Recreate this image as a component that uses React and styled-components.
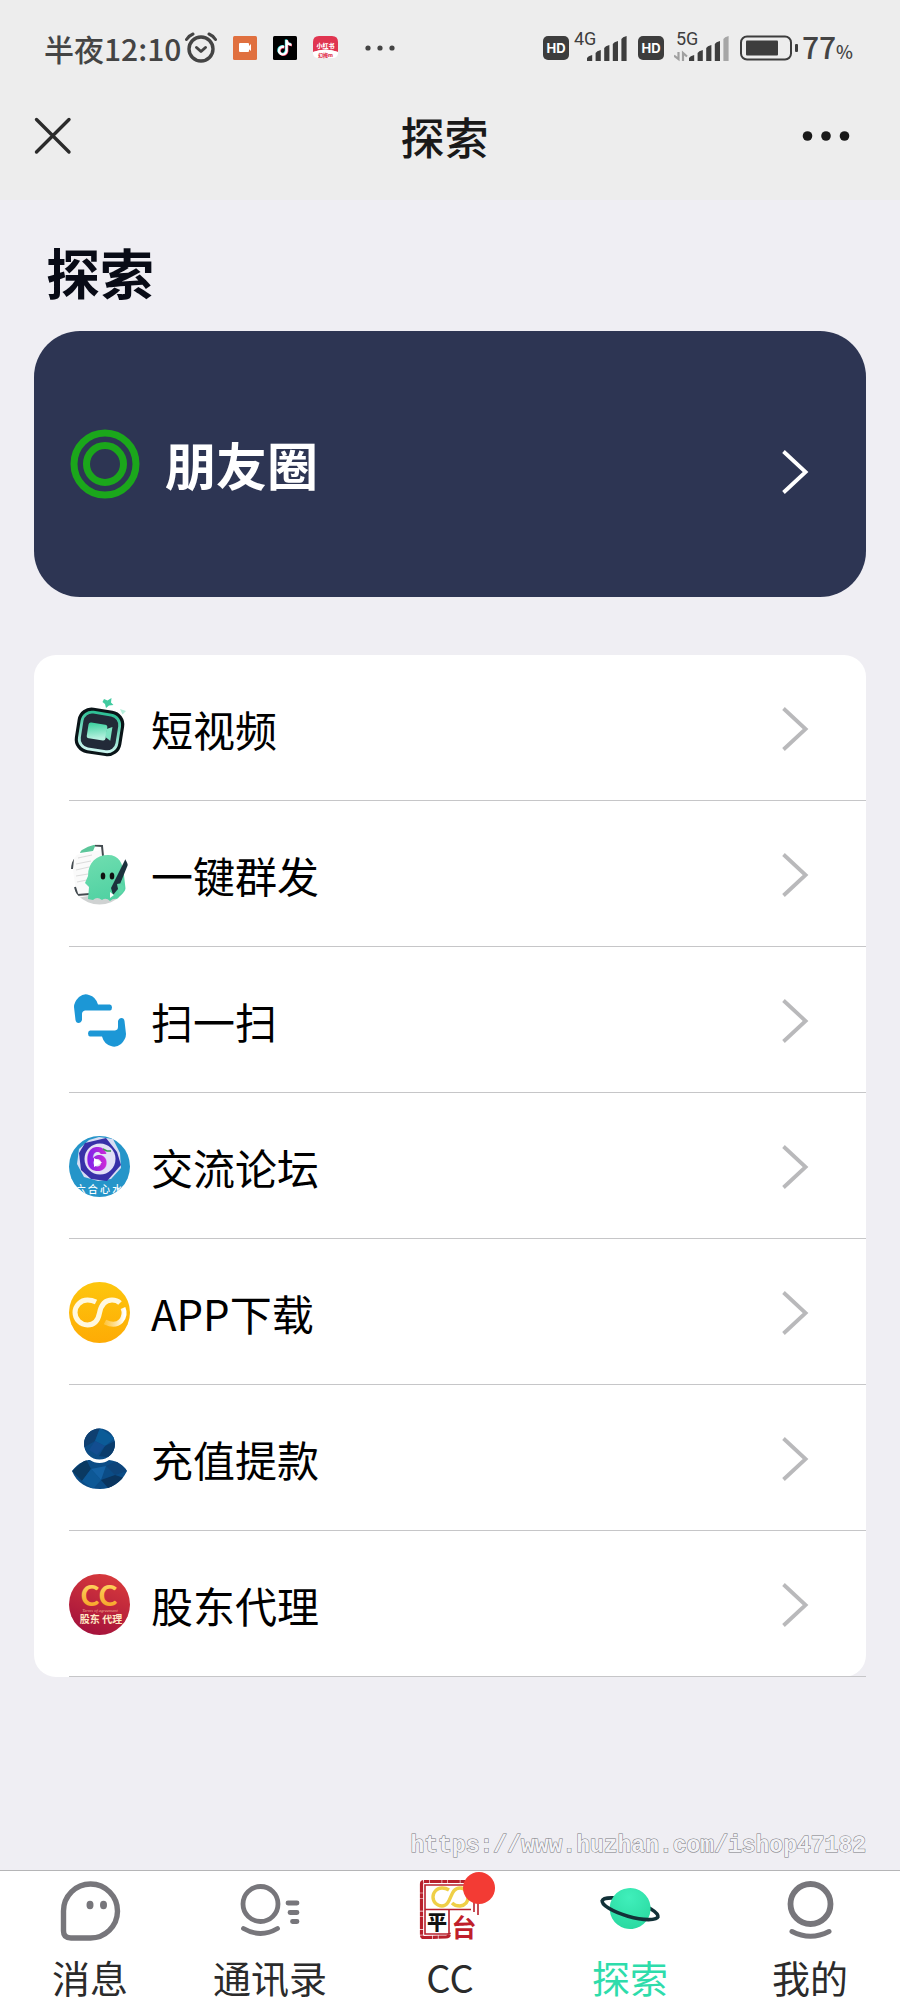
import styled, { createGlobalStyle, css } from "styled-components";

const GRAY = "#77767b";

const App = () => {
  return (
    <Page>
      <GlobalStyle />
      <StatusBar />
      <NavBar>
        <IconButton type="button" aria-label="关闭">
          <CloseIcon />
        </IconButton>
        <NavTitle>探索</NavTitle>
        <IconButton type="button" aria-label="更多" $end>
          <MoreIcon />
        </IconButton>
      </NavBar>

      <Main>
        <Heading>探索</Heading>

        <MomentsCard href="#moments">
          <MomentsIcon />
          <MomentsText>朋友圈</MomentsText>
          <MomentsArrow>
            <Chevron color="#fff" />
          </MomentsArrow>
        </MomentsCard>

        <Menu>
          {menuItems.map(({ id, label, Icon }) => (
            <MenuItem key={id}>
              <MenuLink href={`#${id}`}>
                <Icon />
                <MenuLabel>{label}</MenuLabel>
                <Chevron color="#b9b9bb" />
              </MenuLink>
            </MenuItem>
          ))}
        </Menu>

        <SiteUrl>https://www.huzhan.com/ishop47182</SiteUrl>
      </Main>

      <TabBar>
        {tabs.map(({ id, label, Icon, active, badge }) => (
          <Tab key={id} type="button" $active={active}>
            <TabIcon>
              <Icon />
              {badge && <Badge />}
            </TabIcon>
            {label}
          </Tab>
        ))}
      </TabBar>
    </Page>
  );
};

const StatusBar = () => (
  <StatusRow>
    <StatusGroup $gap={16}>
      <StatusGroup $gap={4}>
        <StatusText>半夜12:10</StatusText>
        <AlarmIcon />
      </StatusGroup>
      <RecorderIcon />
      <TiktokIcon />
      <RedbookIcon />
      <svg width="52" height="24" viewBox="0 0 52 24" fill="#444">
        <circle cx="14" cy="12" r="2.6" />
        <circle cx="26" cy="12" r="2.6" />
        <circle cx="38" cy="12" r="2.6" />
      </svg>
    </StatusGroup>
    <StatusGroup $gap={10}>
      <StatusGroup $gap={3}>
        <HdIcon />
        <Signal name="4G" level={5} />
      </StatusGroup>
      <HdIcon />
      <Signal name="5G" level={4} arrows />
      <StatusGroup $gap={4}>
        <BatteryIcon />
        <StatusText>
          77<small>%</small>
        </StatusText>
      </StatusGroup>
    </StatusGroup>
  </StatusRow>
);

/* 状态栏图标 */
const AlarmIcon = () => (
  <svg width="32" height="32" viewBox="0 0 32 32" fill="none" stroke="#444" strokeWidth="3" strokeLinecap="round" strokeLinejoin="round">
    <circle cx="16" cy="17" r="12" strokeWidth="3.4" />
    <path d="M11.5 15.5 16 19.5 20.5 15.5" />
    <path d="M1.5 7.5Q4 3.5 8 2M30.5 7.5Q28 3.5 24 2" />
  </svg>
);

const RecorderIcon = () => (
  <svg width="24" height="24" viewBox="0 0 24 24">
    <rect width="24" height="24" rx="1.5" fill="#e0703f" />
    <rect x="6" y="7" width="10" height="9" rx="1" fill="#fff" />
    <path d="M15 11 18 8V15L15 12.5Z" fill="#fff" />
  </svg>
);

const TiktokIcon = () => (
  <svg width="24" height="24" viewBox="0 0 24 24">
    <rect width="24" height="24" rx="1.5" fill="#000" />
    <g fill="none" strokeWidth="2.4">
      <path d="M10.5 10.5A3.8 3.8 0 1 0 13 14.5V3.5Q13.5 8 18 8.2" stroke="#3be6e6" />
      <path d="M11.6 11.5A3.8 3.8 0 1 0 14.2 15.5V4.5Q14.5 9 19 9.2" stroke="#f0355c" />
      <path d="M11 11A3.8 3.8 0 1 0 13.6 15V4Q14 8.5 18.5 8.7" stroke="#fff" />
    </g>
  </svg>
);

const RedbookIcon = () => (
  <svg width="25" height="24" viewBox="0 0 25 24">
    <path d="M0 16V6Q0 0 6 0H19Q25 0 25 6V16Q12.5 11 0 16Z" fill="#e03550" />
    <path d="M0 16Q12.5 11 25 16V18Q24 22 20 22H5Q1 22 0 18Z" fill="#fff" />
    <text x="12.5" y="11.5" textAnchor="middle" fontSize="6" fontWeight="900" fill="#fff">小红书</text>
    <text x="12.5" y="21" textAnchor="middle" fontSize="5" fontWeight="900" fill="#e03550">幻梅m</text>
  </svg>
);

const HdIcon = () => (
  <svg width="26" height="24" viewBox="0 0 26 24">
    <rect width="26" height="24" rx="5" fill="#3d3d3d" />
    <text x="13" y="17" textAnchor="middle" fontFamily="Inter, sans-serif" fontSize="13" fontWeight="700" fill="#fff">HD</text>
  </svg>
);

const Signal = ({ name, level, arrows }) => (
  <svg width="56" height="42" viewBox="0 -6 56 42">
    <text x="2" y="12" fontFamily="Roboto, sans-serif" fontSize="18" fill="#3d3d3d">{name}</text>
    {[6, 11, 16, 20, 25].map((h, i) => {
      const x = 15 + i * 8.6;
      return (
        <path
          key={h}
          d={`M${x} 28V${31 - h}Q${x + 1} ${29 - h} ${x + 5.2} ${28 - h}V28Z`}
          fill={i < level ? "#3d3d3d" : "#a6a6a6"}
        />
      );
    })}
    {arrows && <path d="M4.5 19V26L0 22.5M9 28V20L13 23.5" fill="none" stroke="#a0a0a0" strokeWidth="2.2" />}
  </svg>
);

const BatteryIcon = () => (
  <svg width="58" height="26" viewBox="0 0 58 26">
    <rect x="1" y="1.5" width="50" height="23" rx="6" fill="none" stroke="#3d3d3d" strokeWidth="2" />
    <rect x="6" y="5.5" width="32" height="15" rx="1" fill="#3d3d3d" />
    <rect x="55" y="9" width="3" height="8" rx="1" fill="#3d3d3d" />
  </svg>
);

/* 导航栏图标 */
const CloseIcon = () => (
  <svg width="40" height="40" viewBox="0 0 40 40" stroke="#2b2b2b" strokeWidth="3.4" strokeLinecap="round">
    <path d="M3.5 3.5 36 36M36 3.5 3.5 36" />
  </svg>
);

const MoreIcon = () => (
  <svg width="48" height="40" viewBox="0 0 48 40" fill="#191919">
    <circle cx="5.5" cy="20" r="4.8" />
    <circle cx="24" cy="20" r="4.8" />
    <circle cx="42.5" cy="20" r="4.8" />
  </svg>
);

const Chevron = ({ color }) => (
  <svg width="32" height="48" viewBox="0 0 32 48" fill="none" stroke={color} strokeWidth="3.8">
    <path d="M3.5 3.5 25.6 24 3.5 44.5" />
  </svg>
);

const MomentsIcon = () => (
  <svg width="72" height="72" viewBox="0 0 72 72" fill="none" stroke="#1ba71b" strokeWidth="7">
    <circle cx="36" cy="36" r="31" />
    <circle cx="36" cy="36" r="18.5" />
  </svg>
);

/* 菜单图标 */
const VideoIcon = () => (
  <svg width="61" height="61" viewBox="0 0 61 61">
    <defs>
      <linearGradient id="videoRing" x1="0" y1="0" x2="0" y2="1">
        <stop offset="0" stopColor="#2fc096" />
        <stop offset="1" stopColor="#c9f5ee" />
      </linearGradient>
      <linearGradient id="videoCam" x1="0" y1="0" x2="0.3" y2="1">
        <stop offset="0" stopColor="#35cf9b" />
        <stop offset="1" stopColor="#b6f1df" />
      </linearGradient>
    </defs>
    <g transform="rotate(9 31 34)">
      <rect x="7" y="11" width="47" height="46" rx="14" fill="#0a1418" />
      <rect x="11.5" y="15.5" width="38" height="37" rx="10" fill="#222a38" stroke="url(#videoRing)" strokeWidth="2.8" />
      <rect x="18.5" y="26" width="19" height="16" rx="2.5" fill="url(#videoCam)" />
      <path d="M37 30 42.5 27V41L37 38Z" fill="#7de3c2" />
    </g>
    <path d="M35 1 38.5 2.5 42.5 0 42 4.5 44.5 7 40 7.5 37 10 36 6 33.5 4Z" fill="#42cba0" />
    <path d="M51 11 57 13 53.5 16.5Z" fill="#b6efdc" />
  </svg>
);

const BroadcastIcon = () => (
  <svg width="61" height="61" viewBox="0 0 61 61">
    <defs>
      <clipPath id="broadcastClip">
        <circle cx="30.5" cy="30.5" r="30" />
      </clipPath>
      <linearGradient id="ghost" x1="0" y1="0" x2="0.3" y2="1">
        <stop offset="0" stopColor="#70deb0" />
        <stop offset="1" stopColor="#52d2a3" />
      </linearGradient>
    </defs>
    <g clipPath="url(#broadcastClip)">
      <path d="M0 48Q30 57 61 46V61H0Z" fill="#cfd2d2" />
      <path d="M2 12 32 6 36 49 8 54Z" fill="#fafafa" />
      <path d="M11 9 13 3 27 0 24 7Z" fill="#5cc69a" />
      <path d="M26 1.5 33 2 34 12M4 15 3 25M6 43 8.5 51 21 50" fill="none" stroke="#444b50" strokeWidth="2" />
      <path d="M9 14 23 11M7 20 22 17M7 26 20 23M7 32 19 30M8 38 18 36" stroke="#dcdcdc" strokeWidth="1.2" />
      <path d="M19 32C19 18 28 11 39 11C50 11 54 19 55 31L57 49Q51 50 49 55Q44 54 41 57Q37 53 33 56Q28 52 24 56L19 55L20 43L16 39Z" fill="url(#ghost)" />
      <ellipse cx="34" cy="32" rx="2.3" ry="3.6" fill="#111" />
      <ellipse cx="43" cy="32" rx="2.3" ry="3.6" fill="#111" />
      <path d="M57 14 60 18 49 45 44 51 42 44Z" fill="#1c323d" />
      <path d="M41 48 45 51 41 54Z" fill="#fff" />
      <path d="M48 40Q53 38 55 43Q55 49 50 50Z" fill="#5ed7a8" />
    </g>
  </svg>
);

const ScanIcon = () => (
  <svg width="61" height="61" viewBox="0 0 61 61" fill="#1c97d6">
    <path id="scanHalf" d="M5 17Q5 12 10 7Q15 3 20 5Q27 7 29 14.5H41Q43 15 43 17.5Q43 20 41 20.5H16Q13 21 13 24V30Q12 33 9.5 33Q7 33 6.5 30Z" />
    <use href="#scanHalf" transform="rotate(180 31 30.5)" />
  </svg>
);

const ForumIcon = () => (
  <svg width="61" height="61" viewBox="0 0 61 61">
    <defs>
      <clipPath id="forumClip">
        <circle cx="30.5" cy="30.5" r="30.5" />
      </clipPath>
      <linearGradient id="forumSix" x1="0" y1="0" x2="1" y2="0">
        <stop offset="0" stopColor="#7421ea" />
        <stop offset="1" stopColor="#d52bd6" />
      </linearGradient>
    </defs>
    <g clipPath="url(#forumClip)">
      <rect width="61" height="61" fill="#2595c9" />
      <path d="M30 1 44 3 51 17 52 32 42 43 29 45 15 41 8 28 10 13 20 4Z" fill="#d8def4" />
      <path d="M16 7 37 2 48 16 52 29 38 45 22 43 12 34 10 17Z" fill="#3730a8" />
      <circle cx="31" cy="23" r="15.5" fill="#e2e0f6" />
      <text x="28" y="35" textAnchor="middle" fontFamily="Inter, sans-serif" fontSize="33" fontWeight="800" fill="url(#forumSix)">6</text>
      <path d="M25 22 33 26.5 25 31Z" fill="#fff" />
      <path d="M34 13 38 15 42 15" fill="none" stroke="#3d9a52" strokeWidth="1.5" />
      <text x="30" y="56.5" textAnchor="middle" fontSize="10" fontWeight="500" fill="#fff">六 合 心 水</text>
    </g>
  </svg>
);

const DownloadIcon = () => (
  <svg width="61" height="61" viewBox="0 0 61 61">
    <defs>
      <linearGradient id="downloadBg" x1="0" y1="0" x2="0" y2="1">
        <stop offset="0" stopColor="#fdc60d" />
        <stop offset="1" stopColor="#feab05" />
      </linearGradient>
      <linearGradient id="downloadFade" x1="0" y1="0" x2="1" y2="0">
        <stop offset="0" stopColor="#ffe39a" stopOpacity="0.4" />
        <stop offset="1" stopColor="#fff" />
      </linearGradient>
    </defs>
    <circle cx="30.5" cy="30.5" r="30.5" fill="url(#downloadBg)" />
    <g fill="none" strokeWidth="5">
      <path d="M27 20Q23 18 18.5 18A12.5 12.5 0 0 0 18.5 43C25 43 29 39 30.5 31C32 23 36 18 43 18Q48 18 51 21" stroke="#fff8df" />
      <path d="M54 26Q57 33 52 39Q46 45 36 40" stroke="url(#downloadFade)" />
    </g>
  </svg>
);

const RechargeIcon = () => (
  <svg width="61" height="61" viewBox="0 0 61 61">
    <defs>
      <clipPath id="personClip">
        <circle cx="30.5" cy="16" r="15.5" />
        <path d="M3 43C10 34 17 32 21 32C26 36 35 36 40 32C48 33 55 37 58 43C52 55 42 61 31 61C18 61 8 55 3 43Z" />
      </clipPath>
    </defs>
    <g clipPath="url(#personClip)">
      <rect width="61" height="61" fill="#0b4c86" />
      <path d="M15 0H31L26 13L14 20Z" fill="#0f3f70" />
      <path d="M31 0 46 10 36 18 26 13Z" fill="#0b5b97" />
      <path d="M36 18 48 12 44 30 30 28Z" fill="#0a3c6c" />
      <path d="M26 13 36 18 28 27 20 22Z" fill="#134d90" />
      <path d="M3 43 17 31 22 41 13 53Z" fill="#0a3961" />
      <path d="M22 41 37 38 32 52Z" fill="#1461a3" />
      <path d="M37 38 48 33 58 43 46 47Z" fill="#0e447a" />
      <path d="M46 47 55 50 40 61 32 52Z" fill="#0a355f" />
      <path d="M13 53 22 41 32 52 24 61Z" fill="#0d5896" />
    </g>
  </svg>
);

const AgentIcon = () => (
  <svg width="61" height="61" viewBox="0 0 61 61">
    <defs>
      <linearGradient id="agentBg" x1="0.7" y1="0" x2="0.3" y2="1">
        <stop offset="0" stopColor="#d83a3c" />
        <stop offset="1" stopColor="#a3113c" />
      </linearGradient>
      <linearGradient id="agentGold" x1="0" y1="0" x2="0" y2="1">
        <stop offset="0" stopColor="#ffdf6b" />
        <stop offset="1" stopColor="#f59a1e" />
      </linearGradient>
    </defs>
    <circle cx="30.5" cy="30.5" r="30.5" fill="url(#agentBg)" />
    <text x="30" y="32" textAnchor="middle" fontFamily="Lato, sans-serif" fontSize="28" fontWeight="900" fill="url(#agentGold)">CC</text>
    <text x="31" y="38" textAnchor="middle" fontFamily="Liberation Serif, serif" fontStyle="italic" fontSize="4.5" fill="#f0a98f">Terms of agreement</text>
    <text x="32" y="49" textAnchor="middle" fontSize="10" fontWeight="700" fill="#ffe9c4">股东 代理</text>
  </svg>
);

/* 底部标签图标 */
const MessageIcon = () => (
  <svg width="64" height="64" viewBox="0 0 64 64" fill="none" stroke={GRAY} strokeWidth="5.4">
    <path d="M32 60H13Q5.5 60 5.5 53V33A27 27 0 1 1 32 60Z" />
    <ellipse cx="32" cy="27" rx="3.5" ry="4.2" fill={GRAY} stroke="none" />
    <ellipse cx="45.5" cy="27" rx="3.5" ry="4.2" fill={GRAY} stroke="none" />
  </svg>
);

const ContactsIcon = () => (
  <svg width="64" height="64" viewBox="0 0 64 64" fill="none" stroke={GRAY} strokeWidth="4.8" strokeLinecap="round">
    <circle cx="22.5" cy="26" r="17.5" />
    <path d="M5.5 50.5Q22.5 60.5 39.5 50.5M50 25H59M52 34.5H59M54.5 43.5H59" />
  </svg>
);

const PlatformIcon = () => (
  <svg width="64" height="64" viewBox="0 0 64 64" fill="none">
    <path d="M60 3.5H6Q3.5 3.5 3.5 6V57Q3.5 59.5 6 59.5L28 59Q32 59 31 55" stroke="#b8202c" strokeWidth="3.2" strokeDasharray="12 0.6 5 0.6" />
    <path d="M56 7H7V56H31V32M7 31.5H53M56 24V34M60 24V37" stroke="#b8202c" strokeWidth="1.6" />
    <path d="M31 12Q28 10 24 10A9 9 0 0 0 24 28C34 28 31 10 42 10Q46 10 48 13M50 19Q50 27 42 28Q37 28 34 25" stroke="#efcf47" strokeWidth="3.4" />
    <text x="19" y="52" textAnchor="middle" fontSize="20" fontWeight="900" fill="#111">平</text>
    <text x="46" y="59" textAnchor="middle" fontSize="25" fontWeight="700" fill="#c01f2b">台</text>
  </svg>
);

const ExploreIcon = () => (
  <svg width="64" height="64" viewBox="0 0 64 64">
    <defs>
      <radialGradient id="planet" cx="0.4" cy="0.25" r="0.8">
        <stop offset="0" stopColor="#40efbb" />
        <stop offset="1" stopColor="#29d9a0" />
      </radialGradient>
    </defs>
    <g transform="rotate(16 32 31)" fill="none" stroke="#123138" strokeWidth="3.6">
      <path d="M3 31A29 8 0 0 1 61 31" />
      <circle cx="32" cy="30.5" r="20.5" fill="url(#planet)" stroke="none" />
      <path d="M3 30.5A29 8 0 0 0 61 30.5" />
    </g>
  </svg>
);

const MineIcon = () => (
  <svg width="64" height="64" viewBox="0 0 64 64" fill="none" stroke={GRAY} strokeWidth="5.8" strokeLinecap="round">
    <circle cx="32.5" cy="26" r="20" />
    <path d="M14 53.5Q32.5 63 51 53.5" strokeWidth="5" />
  </svg>
);

const menuItems = [
  { id: "video", label: "短视频", Icon: VideoIcon },
  { id: "broadcast", label: "一键群发", Icon: BroadcastIcon },
  { id: "scan", label: "扫一扫", Icon: ScanIcon },
  { id: "forum", label: "交流论坛", Icon: ForumIcon },
  { id: "download", label: "APP下载", Icon: DownloadIcon },
  { id: "recharge", label: "充值提款", Icon: RechargeIcon },
  { id: "agent", label: "股东代理", Icon: AgentIcon },
];

const tabs = [
  { id: "message", label: "消息", Icon: MessageIcon },
  { id: "contacts", label: "通讯录", Icon: ContactsIcon },
  { id: "cc", label: "CC", Icon: PlatformIcon, badge: true },
  { id: "explore", label: "探索", Icon: ExploreIcon, active: true },
  { id: "mine", label: "我的", Icon: MineIcon },
];

export default App;

/* 样式 */
const GlobalStyle = createGlobalStyle`
  * {
    box-sizing: border-box;
  }

  body {
    margin: 0;
    font-family: "Noto Sans CJK SC", sans-serif;
    background: #efeef3;
  }

  svg {
    display: block;
    flex-shrink: 0;
  }
`;

const Page = styled.div`
  min-height: 100vh;
  display: flex;
  flex-direction: column;
`;

const StatusRow = styled.div`
  display: flex;
  justify-content: space-between;
  align-items: center;
  height: 96px;
  padding: 0 47px 0 44px;
  background: #ededed;
`;

const StatusGroup = styled.div`
  display: flex;
  align-items: center;
  gap: ${({ $gap }) => $gap}px;
`;

const StatusText = styled.span`
  font-size: 30px;
  font-weight: 500;
  line-height: 40px;
  color: #444;

  small {
    font-size: 18px;
  }
`;

const NavBar = styled.header`
  display: grid;
  grid-template-columns: 1fr auto 1fr;
  align-items: center;
  height: 104px;
  padding: 0 44px 24px 33px;
  background: #ededed;
`;

const NavTitle = styled.div`
  font-size: 44px;
  font-weight: 500;
  line-height: 60px;
  color: #191919;
`;

const IconButton = styled.button`
  justify-self: start;
  padding: 0;
  border: none;
  background: none;
  cursor: pointer;

  ${({ $end }) =>
    $end &&
    css`
      justify-self: end;
      padding-right: 6px;
    `}
`;

const Main = styled.main`
  flex: 1;
  display: flex;
  flex-direction: column;
  padding: 40px 34px 8px;
`;

const Heading = styled.h1`
  margin: 0 0 27px;
  padding-left: 12px;
  font-size: 54px;
  font-weight: 700;
  line-height: 64px;
  color: #080b16;
`;

const MomentsCard = styled.a`
  display: flex;
  align-items: center;
  gap: 24px;
  min-height: 266px;
  padding: 0 54px 0 35px;
  border-radius: 46px;
  background: #2d3553;
  color: #fff;
  text-decoration: none;
`;

const MomentsText = styled.span`
  flex: 1;
  font-size: 51px;
  font-weight: 700;
  line-height: 64px;
`;

/* 箭头比文字略低 */
const MomentsArrow = styled.span`
  padding-top: 16px;
`;

const Menu = styled.ul`
  margin: 58px 0 0;
  padding: 0 0 0 35px;
  list-style: none;
  border-radius: 22px;
  background: #fff;
`;

const MenuItem = styled.li`
  border-bottom: 1px solid #c6c6c8;
`;

const MenuLink = styled.a`
  display: flex;
  align-items: center;
  gap: 21px;
  min-height: 145px;
  padding: 2px 54px 0 0;
  color: #000;
  text-decoration: none;
`;

const MenuLabel = styled.span`
  flex: 1;
  font-size: 42px;
  line-height: 60px;
`;

const SiteUrl = styled.span`
  margin-top: auto;
  align-self: flex-end;
  font-family: "Liberation Mono", monospace;
  font-size: 23px;
  font-weight: 700;
  line-height: 32px;
  color: #f2f2f6;
  -webkit-text-stroke: 1px #77777c;
  paint-order: stroke fill;
`;

const TabBar = styled.nav`
  display: flex;
  border-top: 1px solid #b5b5b7;
  background: #fff;
`;

const Tab = styled.button`
  flex: 1;
  display: flex;
  flex-direction: column;
  align-items: center;
  gap: 12px;
  padding: 7px 0 0;
  border: none;
  background: none;
  font-family: inherit;
  font-size: 38px;
  line-height: 46px;
  color: #2b2b2b;
  cursor: pointer;

  ${({ $active }) =>
    $active &&
    css`
      color: #2edcab;
    `}
`;

const TabIcon = styled.span`
  position: relative;
`;

const Badge = styled.span`
  position: absolute;
  top: -6px;
  right: -13px;
  width: 32px;
  height: 32px;
  border-radius: 50%;
  background: #f33b34;
`;
